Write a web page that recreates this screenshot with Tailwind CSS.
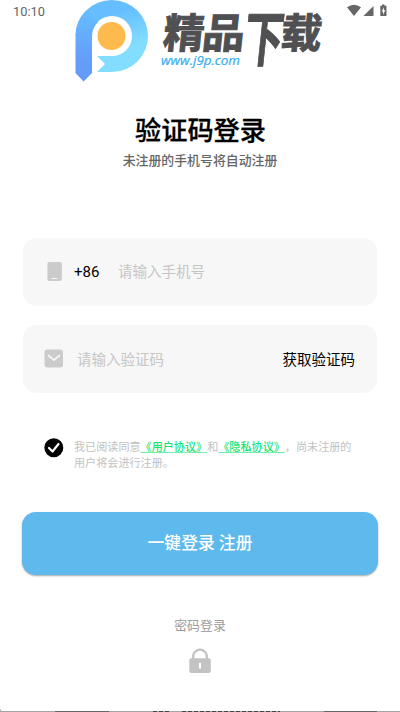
<!doctype html>
<html lang="zh">
<head>
  <meta charset="UTF-8">
  <meta name="viewport" content="width=device-width, initial-scale=1.0">
  <script src="https://cdn.jsdelivr.net/npm/@tailwindcss/browser@4"></script>
  <title>验证码登录</title>
</head>
<body class="bg-white font-[Roboto,'Noto_Sans_CJK_SC',sans-serif]">
  <div class="flex flex-col w-[400px] h-[712px] overflow-hidden">
    <header class="flex h-[90px] shrink-0">
      <span class="w-[75px] pl-[13px] pt-[4px] text-[12.8px] leading-4 text-[#666]">10:10</span>
      <svg class="w-[255px] h-[90px] shrink-0 overflow-visible" viewBox="75 0 255 90">
        <defs>
          <linearGradient id="ring" x1="0" y1="0" x2="0.3" y2="1">
            <stop offset="0.3" stop-color="#66bdff" />
            <stop offset="0.8" stop-color="#82ddff" />
          </linearGradient>
          <linearGradient id="stem" gradientUnits="userSpaceOnUse" x1="0" y1="14" x2="0" y2="81">
            <stop offset="0" stop-color="#66bcff" />
            <stop offset="0.6" stop-color="#649ffa" />
            <stop offset="1" stop-color="#629af8" />
          </linearGradient>
        </defs>
        <path d="M75.500 36A36.250 36 0 0 1 148 36A36 36 0 0 1 112 72H97L105 64L97 56H112A20 20 0 1 0 92 36Z" fill="url(#ring)" />
        <path d="M75.500 36Q75.500 21 86 10.800L98 22Q92 28 92 36V73L83.500 81.500L75.500 73Z" fill="url(#stem)" />
        <circle cx="111.500" cy="36" r="14" fill="#ffba4d" />
        <g fill="#505052" stroke="#505052" stroke-width="1" font-family="Noto Sans CJK SC" font-weight="700">
          <text transform="translate(162 47.700) skewX(-6)" font-size="41">精</text>
          <text transform="translate(201 47.700) skewX(-6) scale(1.040 1)" font-size="41">品</text>
          <text transform="translate(242 61) skewX(-6) scale(0.680 1.040)" font-size="58">下</text>
          <text transform="translate(279.500 47.700) skewX(-6)" font-size="41">载</text>
        </g>
        <text x="161" y="65" font-family="Open Sans" font-style="italic" font-size="13.500" fill="#35adf0" stroke="#35adf0" stroke-width="0.200" textLength="79" lengthAdjust="spacingAndGlyphs">www.j9p.com</text>
      </svg>
      <svg class="ml-[16px] w-[44px] h-5" viewBox="346 0 44 20" fill="#666">
        <path d="M347 7.300Q354 2.300 361 7.300L354 16Z" />
        <path d="M373.500 6V16H363.500Z" />
        <path d="M382 4.500h2.500v1.200h2V16h-6.200V5.700H382Z" />
        <path d="M383.900 7.200L381.700 11.500H383V14.700L385.300 10.200H383.900Z" fill="white" />
      </svg>
    </header>

    <main class="flex flex-col px-[22px]">
      <h1 class="mt-[22px] pl-px text-center text-[26.2px] leading-[38px] font-medium text-black [-webkit-text-stroke:0.3px_black]">验证码登录</h1>
      <p class="mt-px text-center text-[12.9px] leading-5 font-medium text-[#666]">未注册的手机号将自动注册</p>

      <div class="mt-[67px] mx-px flex items-center h-[68px] rounded-[14px] bg-[#f7f7f7] pl-[24px]">
        <svg class="w-[15px] h-[20px]" viewBox="0 0 15 20">
          <rect x="0.400" y="0" width="14.500" height="19" rx="2" fill="#cbcbcb" />
          <path d="M4.500 16.500h6" stroke="#f7f7f7" stroke-width="1" />
        </svg>
        <span class="ml-[12px] w-[44px] text-[15px] leading-5 text-black">+86</span>
        <span class="mt-px text-[14.5px] leading-5 text-[#c6c6c6]">请输入手机号</span>
      </div>

      <div class="mt-[19px] mx-px flex items-center h-[68px] rounded-[14px] bg-[#f7f7f7] pl-[21px] pr-[22px]">
        <svg class="w-[20px] h-[20px]" viewBox="0 0 20 20">
          <rect x="0.500" y="0.500" width="18.500" height="18" rx="3" fill="#cbcbcb" />
          <path d="M4.500 6.500L10 11L15.500 6.500" fill="none" stroke="#f7f7f7" stroke-width="1.700" stroke-linecap="round" stroke-linejoin="round" />
        </svg>
        <span class="mt-[3px] ml-[13px] text-[14.5px] leading-5 text-[#c6c6c6]">请输入验证码</span>
        <span class="mt-[3px] ml-auto text-[14.5px] leading-5 text-black">获取验证码</span>
      </div>

      <div class="mt-[45px] flex pl-[22px]">
        <svg class="w-5 h-5 shrink-0" viewBox="0 0 20 20">
          <circle cx="9.800" cy="9.700" r="9.500" fill="black" />
          <path d="M5 10L8.500 13.500L14.500 6" fill="none" stroke="white" stroke-width="2.200" stroke-linecap="round" stroke-linejoin="round" />
        </svg>
        <p class="mt-[2px] ml-[10px] text-[11.1px] leading-[16px] text-[#c2c2c2] whitespace-nowrap [text-spacing-trim:space-all]">我已阅读同意<a class="font-medium text-[#16e577] underline decoration-[#16e577]/60">《用户协议》</a>和<a class="font-medium text-[#16e577] underline decoration-[#16e577]/60">《隐私协议》</a>，尚未注册的<br>用户将会进行注册。</p>
      </div>

      <button class="mt-[40px] h-[63px] shrink-0 rounded-[14px] bg-[#5eb9ec] text-[16.8px] font-medium text-white shadow-[0_1px_2px_rgba(0,0,0,0.35)]">一键登录 注册</button>

      <div class="mt-[41px] flex flex-col items-center">
        <span class="text-[12.9px] leading-5 text-[#9b9b9b]">密码登录</span>
        <svg class="mt-[12px] w-[22px] h-[26px]" viewBox="0 0 22 26">
          <path d="M4.200 12V8.500a6.800 6.800 0 0 1 13.600 0V12" fill="none" stroke="#c3c3c3" stroke-width="2.300" />
          <rect x="0.300" y="10.300" width="21.500" height="14.700" rx="2" fill="#c3c3c3" />
          <rect x="9.900" y="14.800" width="2.200" height="6" rx="1.100" fill="white" />
        </svg>
      </div>
    </main>

    <svg class="mt-auto w-[400px] h-1 shrink-0" viewBox="0 0 400 4">
      <path d="M0 0V4H4Q0.800 4 0 0Z" fill="#aaa" />
      <path d="M0 3h400v1H0Z" fill="#a4a4a4" />
      <path d="M55 3h54v1H55ZM324 3h53v1h-53Z" fill="#666" />
      <path d="M153 3.500h17M182 3.500h98" stroke="#444" stroke-dasharray="4 2" />
    </svg>
  </div>
</body>
</html>
